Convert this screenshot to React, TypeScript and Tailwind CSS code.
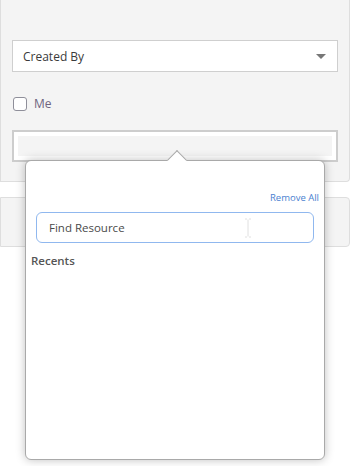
import React from "react";

export default function App() {
  const font = { fontFamily: '"Open Sans", "Noto Sans", Arial, sans-serif' };
  return (
    <div className="relative w-[354px] h-[466px] bg-white overflow-hidden" style={font}>
      <div className="w-[350px] h-[182px] bg-[#f4f4f4] border-l border-r border-b border-[#dedede] rounded-br-[4px] pt-[40px] px-[11px]">
        <div className="h-[32px] bg-white border border-[#cfcfcf] flex items-center justify-between pl-[10px] pr-[11px]">
          <span className="text-[12px] text-[#3a3a3a] pt-[1px]">Created By</span>
          <svg width="10" height="5" viewBox="0 0 10 5">
            <path d="M0 0 L10 0 L5 5 Z" fill="#777" />
          </svg>
        </div>
        <div className="mt-[25px] flex items-center gap-[7px] pl-[1px]">
          <div className="w-[14px] h-[14px] rounded-[3px] border border-[#8f8f9a] bg-white" />
          <span className="text-[12px] text-[#6e6580] leading-[14px]">Me</span>
        </div>
        <div className="mt-[19px] h-[32px] border-2 border-[#cdcdcd] bg-white p-[4px]">
          <div className="h-full bg-[#f4f4f4]" />
        </div>
      </div>
      <div className="mt-[15px] w-[350px] h-[50px] bg-[#f4f4f4] border border-[#dedede] rounded-r-[4px]" />

      <div className="absolute left-[25px] top-[160px] w-[300px] h-[300px] bg-white border border-[#a9a9a9] rounded-[6px] shadow-[0_0_10px_rgba(0,0,0,0.25)]">
        <div className="absolute left-[144px] top-[-8px] w-[14px] h-[14px] rotate-45 bg-white border-l border-t border-[#a9a9a9]" />
        <div className="relative pt-[30px] px-[10px]">
          <div className="flex justify-end -mr-[5px]">
            <span className="text-[9.5px] leading-[14px] text-[#4a7fd0]">Remove All</span>
          </div>
          <div className="mt-[7px] h-[31px] rounded-[6px] border border-[#90b8ef] flex items-center pl-[12px] relative">
            <span className="text-[11.5px] text-[#4a4a4a]">Find Resource</span>
            <svg className="absolute left-[207px] top-[5px]" width="8" height="20" viewBox="0 0 8 20">
              <path d="M1 1 H3 M5 1 H7 M4 1.5 V18.5 M1 19 H3 M5 19 H7" stroke="#e0e0e0" strokeWidth="1" fill="none" />
            </svg>
          </div>
          <div className="mt-[9px] -ml-[5px] text-[11.5px] font-semibold text-[#555]">Recents</div>
        </div>
      </div>
    </div>
  );
}
